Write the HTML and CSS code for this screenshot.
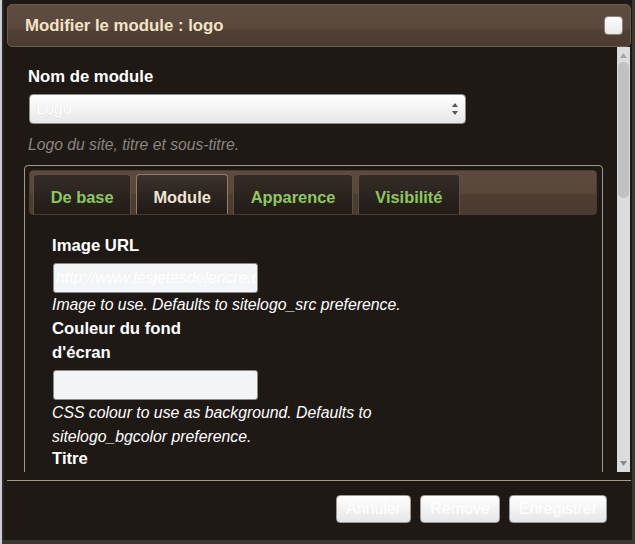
FILE: index.html
```html
<!DOCTYPE html>
<html lang="fr">
<head>
<meta charset="utf-8">
<title>Modifier le module</title>
<link rel="stylesheet" href="styles.css">
</head>
<body>
<div class="dialog">
  <div class="titlebar">
    <span class="title">Modifier le module : logo</span>
    <span class="close"></span>
  </div>
  <div class="content">
    <div class="main">
      <div class="field-label top">Nom de module</div>
      <div class="select">
        <span class="select-text">Logo</span>
        <svg class="arrows" width="8" height="14" viewBox="0 0 8 14">
          <path d="M4 1 L7 5 L1 5 Z" fill="#555"/>
          <path d="M1 9 L7 9 L4 13 Z" fill="#555"/>
        </svg>
      </div>
      <div class="desc">Logo du site, titre et sous-titre.</div>
      <div class="fieldset">
        <div class="tabbar">
          <div class="tab">De base</div>
          <div class="tab active">Module</div>
          <div class="tab">Apparence</div>
          <div class="tab">Visibilité</div>
        </div>
        <div class="fields">
          <div class="label">Image URL</div>
          <div class="input"><span class="input-text">http://www.lesjetesdelencre.com</span></div>
          <div class="help">Image to use. Defaults to sitelogo_src preference.</div>
          <div class="label">Couleur du fond d'écran</div>
          <div class="input"></div>
          <div class="help spaced">CSS colour to use as background. Defaults to sitelogo_bgcolor preference.</div>
          <div class="label tight">Titre</div>
        </div>
      </div>
    </div>
    <div class="scrollbar">
      <svg class="sb-up" width="7" height="5" viewBox="0 0 7 5"><path d="M3.5 0 L7 5 L0 5 Z" fill="#a6a6a6"/></svg>
      <div class="thumb"></div>
      <div class="sb-fill"></div>
      <svg class="sb-down" width="7" height="5" viewBox="0 0 7 5"><path d="M0 0 L7 0 L3.5 5 Z" fill="#8a8a8a"/></svg>
    </div>
  </div>
  <div class="footer">
    <button class="btn">Annuler</button>
    <button class="btn">Remove</button>
    <button class="btn">Enregistrer</button>
  </div>
</div>
</body>
</html>
```

FILE: styles.css
```css
html, body {
  margin: 0;
  padding: 0;
}
body {
  width: 635px;
  height: 544px;
  overflow: hidden;
  background: #3a3733;
  border-left: 2px solid #cbcfd3;
  box-sizing: border-box;
  font-family: "Liberation Sans", Arial, sans-serif;
}
.dialog {
  width: 630px;
  height: 540px;
  box-sizing: border-box;
  background: #1f1915;
  border-left: 2px solid #2c2723;
  padding: 4px 1px 0 3px;
  display: flex;
  flex-direction: column;
}
.titlebar {
  height: 43px;
  box-sizing: border-box;
  border: 1px solid #6e5a4a;
  border-radius: 5px;
  background: linear-gradient(#5e4c40 0%, #5b493d 55%, #513f33 62%, #4b3b30 100%);
  display: flex;
  align-items: center;
  justify-content: space-between;
  padding: 0 7px 0 17px;
}
.title {
  color: #f3e4c6;
  font-weight: bold;
  font-size: 16.8px;
}
.close {
  width: 17px;
  height: 17px;
  border: 1px solid #8a847c;
  border-radius: 4px;
  background: linear-gradient(#ffffff, #e9e9e9);
}
.content {
  height: 425px;
  display: flex;
  overflow: hidden;
}
.main {
  flex: 1;
  padding: 18px 0 0 17px;
  overflow: hidden;
}
.field-label {
  color: #ffffff;
  font-weight: bold;
  font-size: 16.7px;
  line-height: 24px;
  margin-left: 4px;
}
.select {
  margin: 5px 0 0 5px;
  width: 437px;
  height: 30px;
  box-sizing: border-box;
  border: 1px solid #8c8c8c;
  border-radius: 4px;
  background: linear-gradient(#ffffff, #e7e7e7);
  display: flex;
  align-items: center;
  justify-content: space-between;
  padding: 0 6px 0 6px;
}
.select-text {
  color: #ffffff;
  font-size: 16px;
  text-shadow: 0 0 1px #d8d8d8;
}
.desc {
  margin: 9px 0 0 4px;
  color: #8b8580;
  font-style: italic;
  font-size: 15.7px;
  line-height: 24px;
}
.fieldset {
  margin-top: 8px;
  width: 579px;
  height: 400px;
  box-sizing: border-box;
  border: 1px solid #a39882;
  border-radius: 4px;
  padding: 4px 5px 0 4px;
}
.tabbar {
  height: 45px;
  box-sizing: border-box;
  border: 1px solid #4a3c32;
  border-radius: 4px;
  background: linear-gradient(#5d4b3f 0%, #594739 50%, #4e3e32 56%, #4a3a2f 100%);
  display: flex;
  gap: 4.5px;
  padding: 4px 0 0 3px;
  align-items: flex-end;
}
.tab {
  height: 40px;
  box-sizing: border-box;
  border: 1px solid #5e4f43;
  border-bottom: none;
  border-radius: 4px 4px 0 0;
  background: linear-gradient(#342c26 0%, #2b241f 50%, #221b17 100%);
  color: #8dc85a;
  font-weight: bold;
  font-size: 16.4px;
  line-height: 40px;
  padding: 2px 16.7px 0;
}
.tab.active {
  border-color: #8d7d6b;
  background: linear-gradient(#3b332d 0%, #2c2520 50%, #201a16 100%);
  color: #efe5d4;
}
.fields {
  padding: 19px 0 0 23px;
}
.label {
  color: #ffffff;
  font-weight: bold;
  font-size: 16.7px;
  line-height: 24px;
  width: 170px;
}
.label.tight {
  margin-top: -2px;
}
.input {
  margin: 5px 0 0 1px;
  width: 205px;
  height: 30px;
  box-sizing: border-box;
  border: 1px solid #8a8a8a;
  border-radius: 3px;
  background: #f3f4f5;
  overflow: hidden;
  white-space: nowrap;
  padding: 0 2px;
  line-height: 28px;
}
.input-text {
  color: #ffffff;
  font-style: italic;
  font-size: 15.8px;
}
.help {
  color: #ffffff;
  font-style: italic;
  font-size: 15.8px;
  line-height: 24px;
  width: 380px;
}
.help.spaced {
  margin-top: 1px;
}
.scrollbar {
  width: 13px;
  background: #dcdcdc;
  display: flex;
  flex-direction: column;
  align-items: center;
  margin-right: 1px;
}
.sb-up {
  margin-top: 6px;
}
.thumb {
  margin-top: 4px;
  width: 11px;
  height: 136px;
  border-radius: 5px;
  background: #c1c1c1;
}
.sb-fill {
  flex: 1;
}
.sb-down {
  margin-bottom: 6px;
}
.footer {
  margin-top: 8px;
  border-top: 1px solid #a59b85;
  flex: 1;
  display: flex;
  justify-content: flex-end;
  align-items: flex-start;
  gap: 9px;
  padding: 14px 24px 0 0;
}
.btn {
  height: 28px;
  box-sizing: border-box;
  border: 1px solid #9a9a9a;
  border-radius: 4px;
  background: linear-gradient(#ffffff, #e6e6e6);
  color: #ffffff;
  font-family: "Liberation Sans", Arial, sans-serif;
  font-size: 16px;
  padding: 0 9px;
  margin: 0;
}
```
